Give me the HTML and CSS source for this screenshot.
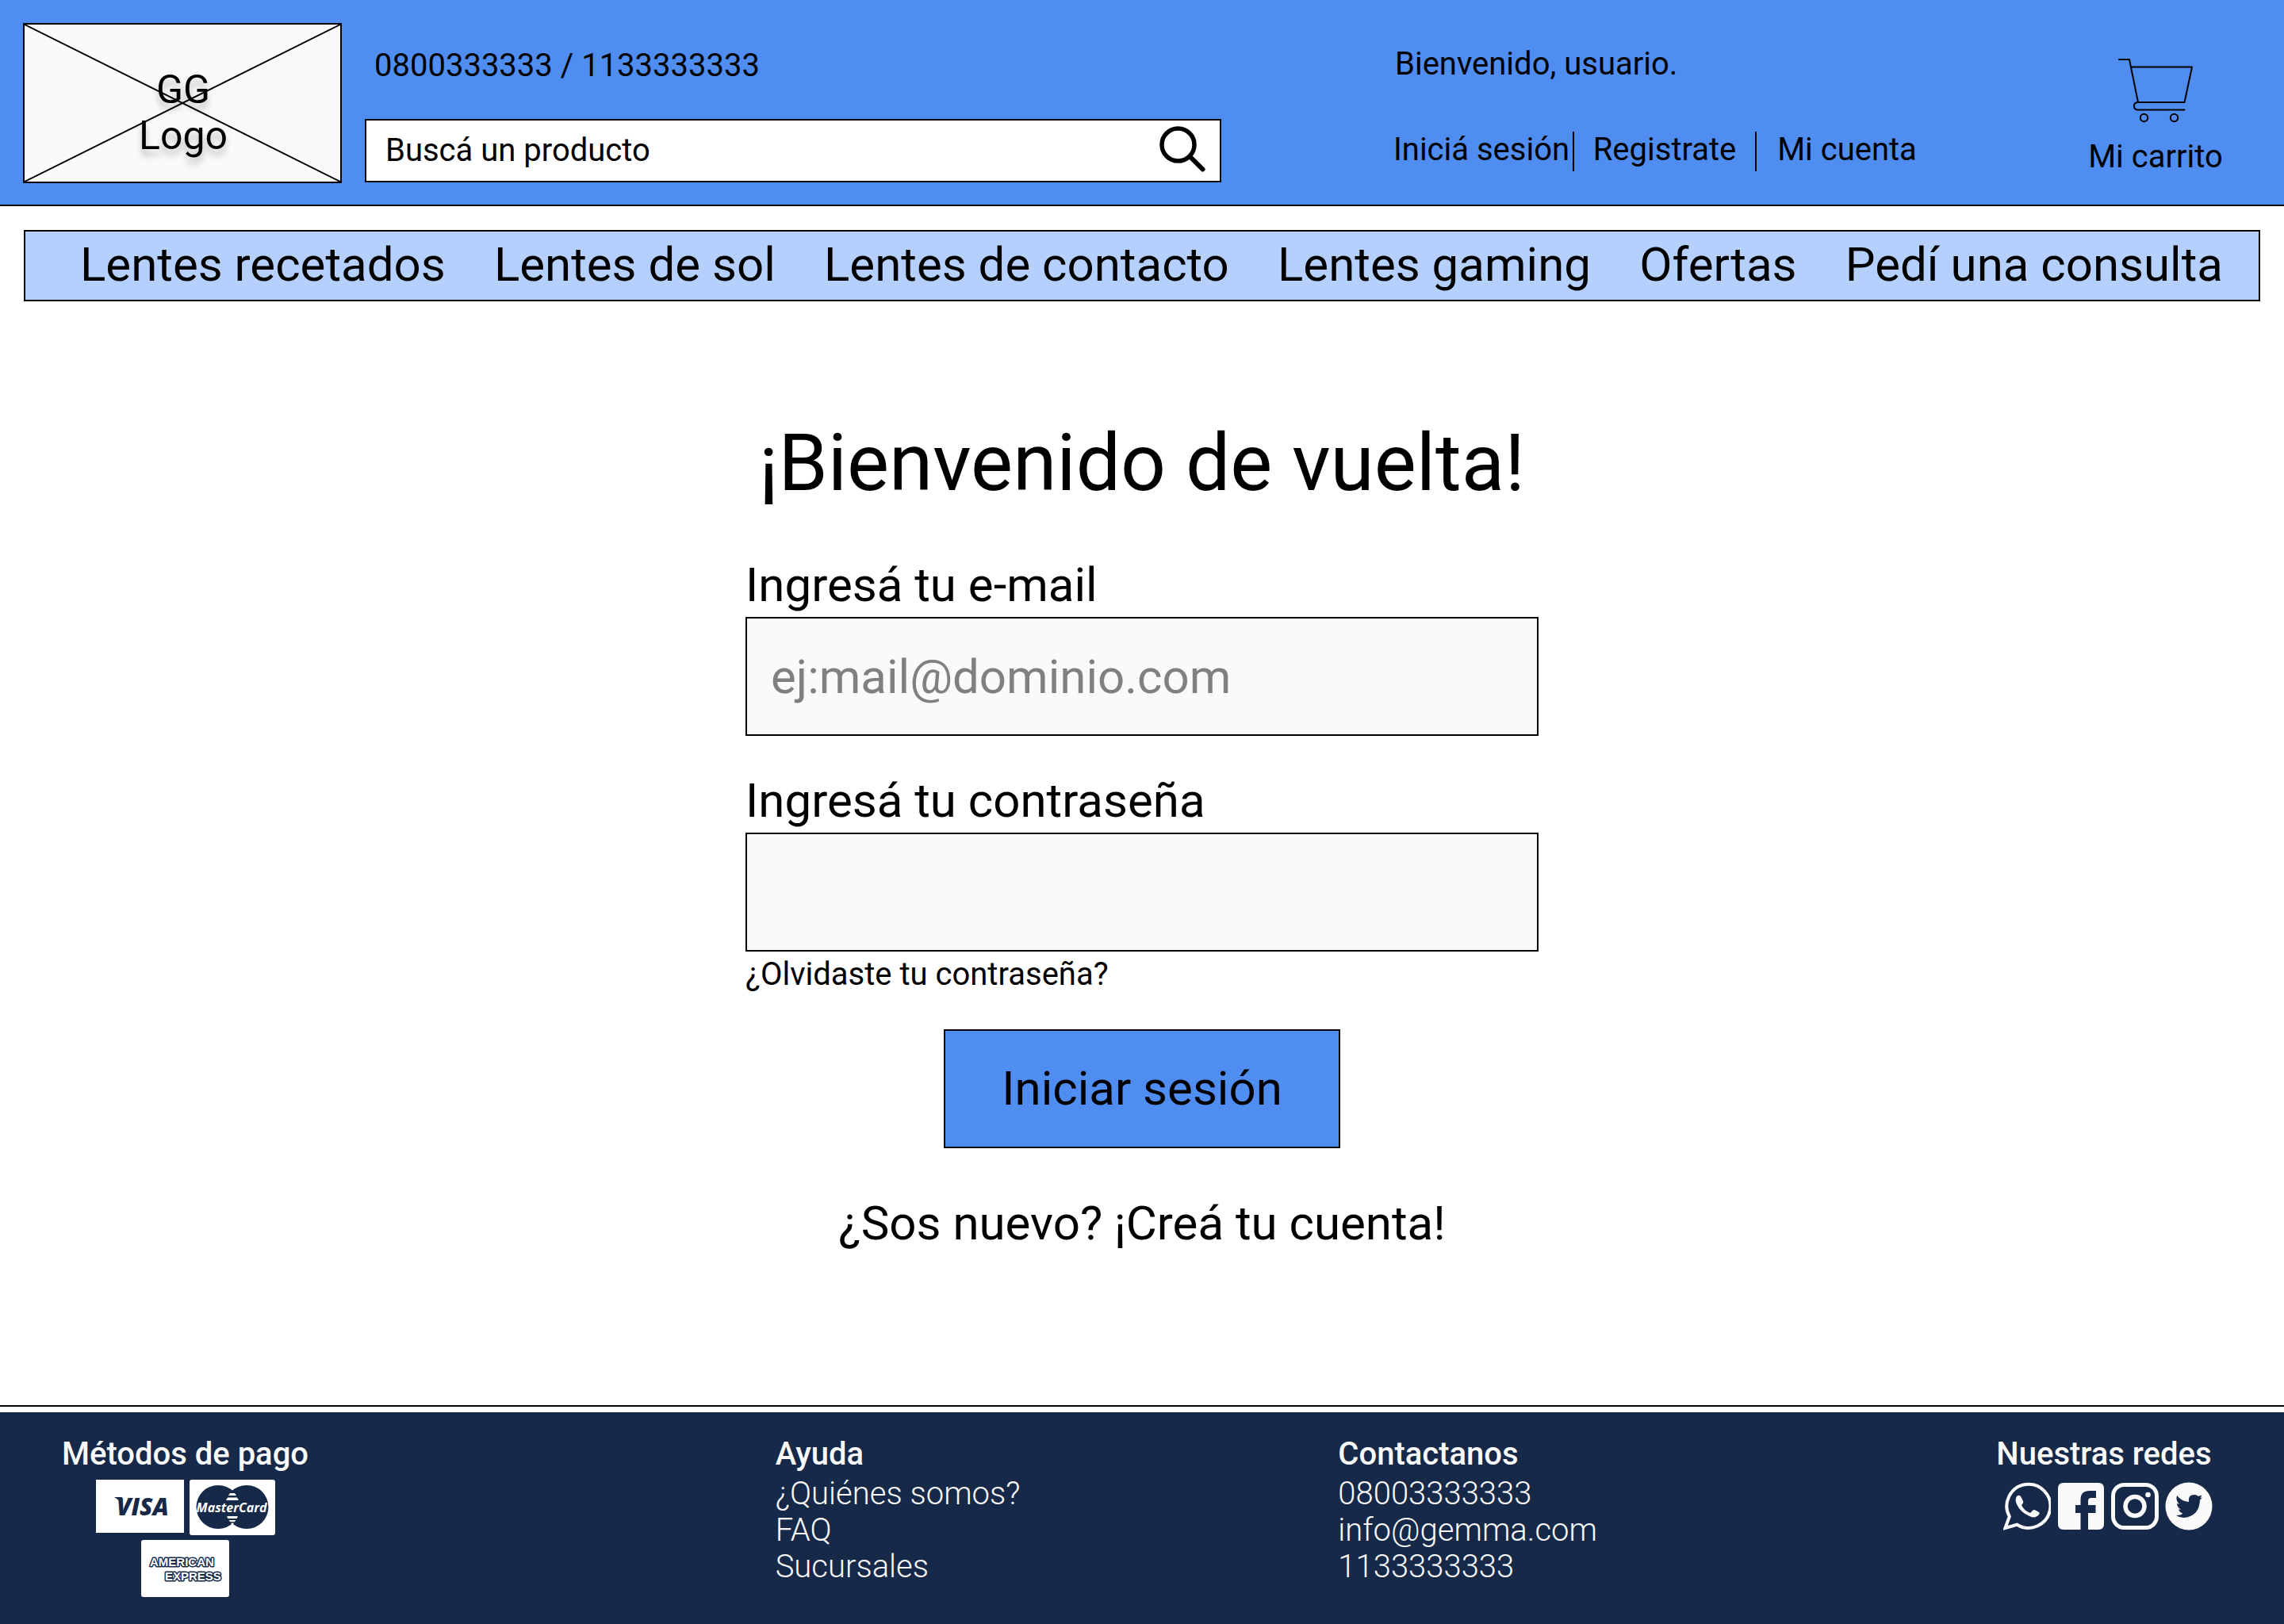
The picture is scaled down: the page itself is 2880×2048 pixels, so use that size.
FILE: index.html
```html
<!DOCTYPE html>
<html lang="es">
<head>
<meta charset="utf-8">
<meta name="viewport" content="width=device-width, initial-scale=1">
<title>GG - Iniciar sesión</title>
<link rel="stylesheet" href="styles.css">
</head>
<body>
<header class="header">
  <a class="logo" href="#">
    <svg class="logo__cross" viewBox="0 0 398 198" preserveAspectRatio="none" aria-hidden="true"><path d="M0 0 398 198M398 0 0 198" fill="none" stroke="#000" stroke-width="2"/></svg>
    <span class="logo__text">GG<br>Logo</span>
  </a>
  <div class="contact">
    <p class="contact__phones">0800333333 / 1133333333</p>
    <form class="search">
      <input class="search__input" type="search" placeholder="Buscá un producto" aria-label="Buscá un producto">
      <button class="search__button" type="button" aria-label="Buscar">
        <svg class="search__icon" viewBox="0 0 58 58" aria-hidden="true"><circle cx="23.500" cy="23.500" r="20.500" fill="none" stroke="#000" stroke-width="5.500"/><path d="M38.500 38.500 54.500 54.500" stroke="#000" stroke-width="6" stroke-linecap="round"/></svg>
      </button>
    </form>
  </div>
  <div class="account">
    <p class="account__greeting">Bienvenido, usuario.</p>
    <ul class="account__links">
      <li><a href="#">Iniciá sesión</a></li>
      <li><a href="#">Registrate</a></li>
      <li><a href="#">Mi cuenta</a></li>
    </ul>
  </div>
  <a class="cart" href="#">
    <svg class="cart__icon" viewBox="0 0 96 82" fill="none" stroke="#000" stroke-width="2" stroke-linecap="round" stroke-linejoin="round" aria-hidden="true"><path d="M2 2H15L26 56M17 11.500H94L84.500 56M84.500 56H25A4.800 4.800 0 0 0 25 65.500H84.500"/><circle cx="33.500" cy="75.500" r="4.700"/><circle cx="71.500" cy="75.500" r="4.700"/></svg>
    <span>Mi carrito</span>
  </a>
</header>

<nav class="nav">
  <a href="#">Lentes recetados</a>
  <a href="#">Lentes de sol</a>
  <a href="#">Lentes de contacto</a>
  <a href="#">Lentes gaming</a>
  <a href="#">Ofertas</a>
  <a href="#">Pedí una consulta</a>
</nav>

<main class="main">
  <h1 class="title">¡Bienvenido de vuelta!</h1>
  <form class="login">
    <div class="field">
      <label for="email">Ingresá tu e-mail</label>
      <input id="email" type="email" placeholder="ej:mail@dominio.com">
    </div>
    <div class="field">
      <label for="password">Ingresá tu contraseña</label>
      <input id="password" type="password">
    </div>
    <a class="login__forgot" href="#">¿Olvidaste tu contraseña?</a>
    <button class="login__submit" type="button">Iniciar sesión</button>
    <a class="login__signup" href="#">¿Sos nuevo? ¡Creá tu cuenta!</a>
  </form>
</main>

<footer class="footer">
  <div class="footer__inner">
    <section class="footer__column footer__column--center">
      <h2>Métodos de pago</h2>
      <div class="cards">
        <svg class="card" viewBox="0 0 112 67" width="112" height="67" role="img" aria-label="Visa"><rect width="111" height="67" fill="#fff"/><text class="card__visa" x="26" y="45">VISA</text><path d="M23 22H33L32 31Q29 25 23 22Z" fill="#162949"/></svg>
        <svg class="card" viewBox="0 0 108 70" width="108" height="70" role="img" aria-label="MasterCard"><rect width="108" height="70" rx="3" fill="#fff"/><circle cx="36" cy="34.500" r="27.500" fill="#162949"/><circle cx="72" cy="34.500" r="27.500" fill="#162949"/><path d="M51 17H57L59 20H49ZM48 22.500H60L62 26H46ZM47 46H61L59.500 49H48.500ZM49.500 51H58.500L57 53H51ZM52 54.500H56L54 57Z" fill="#fff"/><text class="card__mastercard" x="53" y="41">MasterCard</text></svg>
        <svg class="card" viewBox="0 0 112 73" width="112" height="73" role="img" aria-label="American Express"><rect width="111" height="72" rx="3" fill="#fff"/><text class="card__amex" x="11" y="33">AMERICAN</text><text class="card__amex" x="30" y="51">EXPRESS</text></svg>
      </div>
    </section>
    <section class="footer__column">
      <h2>Ayuda</h2>
      <ul>
        <li><a href="#">¿Quiénes somos?</a></li>
        <li><a href="#">FAQ</a></li>
        <li><a href="#">Sucursales</a></li>
      </ul>
    </section>
    <section class="footer__column">
      <h2>Contactanos</h2>
      <ul>
        <li><a href="#">08003333333</a></li>
        <li><a href="#">info@gemma.com</a></li>
        <li><a href="#">1133333333</a></li>
      </ul>
    </section>
    <section class="footer__column footer__column--center">
      <h2>Nuestras redes</h2>
      <div class="social">
        <a href="#" aria-label="WhatsApp"><svg viewBox="0 0 60 61" width="60" height="61"><path d="M2.500 58 7.800 43.500A27.500 27.500 0 1 1 17.500 53.700Z" fill="none" stroke="#fafafa" stroke-width="4"/><path d="M17 18Q20 15.500 22 18L25 24Q26 26 23 29Q26 36 34 39L37 36Q38.500 34.500 40.500 35.500L45 38Q46.500 39 45 41Q40 47 32 42.500Q22 38 17.500 29Q14 22 17 18Z" fill="#fafafa"/></svg></a>
        <a href="#" aria-label="Facebook"><svg viewBox="0 0 60 61" width="60" height="61"><path d="M8 1H52Q59 1 59 8V53Q59 60 52 60H39V39H48.500V29H39V24Q39 20 43 20H49V11H41Q29.500 11 29.500 22V29H23V39H29.500V60H8Q1 60 1 53V8Q1 1 8 1Z" fill="#fafafa"/></svg></a>
        <a href="#" aria-label="Instagram"><svg viewBox="0 0 60 61" width="60" height="61"><rect x="2.500" y="3.500" width="55" height="54" rx="14" fill="none" stroke="#fafafa" stroke-width="5"/><circle cx="30" cy="30.500" r="12" fill="none" stroke="#fafafa" stroke-width="5.500"/><circle cx="46.500" cy="16" r="3.300" fill="#fafafa"/></svg></a>
        <a href="#" aria-label="Twitter"><svg viewBox="0 0 60 61" width="60" height="61"><ellipse cx="30" cy="30.500" rx="29.500" ry="30" fill="#fafafa"/><path d="M15 17Q21 24.500 30 25Q28.500 16 37 16Q40 16 42 18L46.500 16.500L44.500 20L47 19.500L44 22.500Q43.500 38 32 43Q22 47.500 14 42Q20 42 22.500 39.500Q18.500 38.500 17 34.500H20Q15 32 15 27L18 28Q13 23 15 17Z" fill="#162949"/></svg></a>
      </div>
    </section>
  </div>
</footer>
</body>
</html>
```
FILE: styles.css
```css
:root {
  --blue: #4f8df1;
  --light-blue: #b5d0fc;
  --navy: #162949;
  --off-white: #fafafa;
}

* {
  box-sizing: border-box;
}

body {
  display: flex;
  flex-direction: column;
  min-height: 100vh;
  margin: 0;
  background: #fff;
  color: #000;
  font-family: Roboto, sans-serif;
  font-size: 40px;
  line-height: 46px;
}

h1,
h2,
p,
ul {
  margin: 0;
  padding: 0;
}

ul {
  list-style: none;
}

a {
  color: inherit;
  text-decoration: none;
}

button,
input {
  border-radius: 0;
  color: inherit;
  font: inherit;
}

svg {
  display: block;
}

/* Header */

.header {
  display: grid;
  grid-template-columns: 402px 1080fr 987fr 266px;
  column-gap: 29px;
  padding: 29px 29px 27px;
  border-bottom: 2px solid #000;
  background: var(--blue);
}

.logo {
  display: grid;
  height: 202px;
  border: 2px solid #000;
  background: var(--off-white);
}

.logo__cross,
.logo__text {
  grid-area: 1 / 1;
}

.logo__cross {
  width: 100%;
  height: 198px;
}

.logo__text {
  padding: 53px 0 0 2px;
  font-size: 50px;
  line-height: 58px;
  text-align: center;
  text-shadow: 0 8px 8px rgba(0, 0, 0, 0.25);
}

.contact {
  display: flex;
  flex-direction: column;
  gap: 44px;
  padding-top: 31px;
}

.contact__phones {
  padding-left: 12px;
}

.search {
  display: flex;
  align-items: center;
  height: 80px;
  padding: 0 18px 0 24px;
  border: 2px solid #000;
  background: #fff;
}

.search__input {
  flex: 1;
  min-width: 0;
  padding: 0;
  border: 0;
  outline: 0;
  background: none;
}

.search__input::placeholder {
  color: #000;
  opacity: 1;
}

.search__button {
  padding: 0 0 4px;
  border: 0;
  background: none;
}

.search__icon {
  width: 58px;
  height: 58px;
}

.account {
  display: flex;
  flex-direction: column;
  gap: 62px;
  padding: 29px 0 0 184px;
}

.account__greeting {
  padding-left: 6px;
}

.account__links {
  display: grid;
  grid-template-columns: repeat(3, 230px);
  text-align: center;
  white-space: nowrap;
}

.account__links li {
  padding-bottom: 4px;
}

.account__links li + li {
  border-left: 2px solid #000;
}

.cart {
  display: flex;
  flex-direction: column;
  align-items: center;
  gap: 20px;
  padding-top: 44px;
}

.cart__icon {
  width: 96px;
  height: 82px;
}

/* Category bar */

.nav {
  display: flex;
  align-items: center;
  justify-content: space-between;
  height: 90px;
  margin: 30px 30px 0;
  padding: 0 45px 2px 69px;
  border: 2px solid #000;
  background: var(--light-blue);
  font-size: 60px;
  line-height: 70px;
}

/* Login */

.main {
  display: flex;
  flex: 1;
  flex-direction: column;
  align-items: center;
  padding: 145px 30px 60px;
}

.title {
  font-size: 100px;
  font-weight: 400;
  line-height: 118px;
}

.login {
  display: flex;
  flex-direction: column;
  width: 100%;
  max-width: 1000px;
  margin-top: 60px;
}

.field {
  display: flex;
  flex-direction: column;
  gap: 5px;
  font-size: 60px;
  line-height: 70px;
}

.field + .field {
  margin-top: 47px;
}

.field input {
  height: 150px;
  padding: 0 30px;
  border: 2px solid #000;
  background: var(--off-white);
}

.field input::placeholder {
  color: #808080;
  opacity: 1;
}

.login__forgot {
  align-self: flex-start;
  margin-top: 6px;
}

.login__submit {
  align-self: center;
  width: 500px;
  height: 150px;
  margin-top: 46px;
  border: 2px solid #000;
  background: var(--blue);
  font-size: 60px;
  line-height: 70px;
}

.login__signup {
  align-self: center;
  margin-top: 60px;
  font-size: 60px;
  line-height: 70px;
}

/* Footer */

.footer {
  padding-top: 7px;
  border-top: 2px solid #000;
}

.footer__inner {
  display: grid;
  grid-template-columns: 900fr 710fr 829fr auto;
  padding: 30px 90px 33px 78px;
  background: var(--navy);
  color: var(--off-white);
  font-weight: 300;
}

.footer__column {
  display: flex;
  flex-direction: column;
  align-items: flex-start;
  justify-self: start;
  gap: 4px;
}

.footer__column--center {
  align-items: center;
  gap: 9px;
}

.footer h2 {
  font-size: 40px;
  font-weight: 500;
  line-height: 46px;
}

.cards {
  display: flex;
  flex-wrap: wrap;
  justify-content: center;
  gap: 6px;
  max-width: 240px;
}

.card text {
  font-family: "Open Sans", sans-serif;
  font-style: italic;
  font-weight: 800;
}

.card .card__visa {
  fill: var(--navy);
  font-size: 30px;
}

.card .card__mastercard {
  fill: #fff;
  font-size: 16px;
  font-weight: 700;
  text-anchor: middle;
}

.card .card__amex {
  fill: #fff;
  stroke: var(--navy);
  stroke-width: 3px;
  stroke-linejoin: round;
  paint-order: stroke;
  font-family: "Liberation Sans", sans-serif;
  font-size: 15px;
  font-style: normal;
  font-weight: 700;
}

.social {
  display: flex;
  gap: 8px;
  padding: 3px 0 0 10px;
}
```
